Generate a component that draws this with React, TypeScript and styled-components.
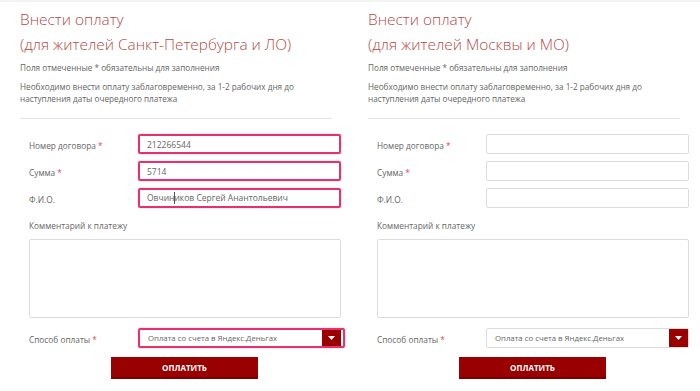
import React from "react";
import styled, { createGlobalStyle, css } from "styled-components";

const Global = createGlobalStyle`
  html, body { margin: 0; padding: 0; background: #fff; }
  body { font-family: "Open Sans", "Liberation Sans", sans-serif; color: #555; }
  * { box-sizing: border-box; }
`;

const Page = styled.div`
  width: 700px;
  height: 391px;
  overflow: hidden;
  border-top: 2px solid #f3f3f3;
  padding-left: 20px;
  display: grid;
  grid-template-columns: 330px 330px;
  column-gap: 18px;
`;

const Column = styled.div`
  display: flex;
  flex-direction: column;
`;

const Header = styled.div`
  width: 312px;
  padding-top: 5px;
  padding-bottom: 13px;
  border-bottom: 1px solid #e4e4e4;
`;

const Title = styled.h2`
  margin: 0;
  font-weight: 300;
  font-size: 15.4px;
  line-height: 25px;
  color: #b54a47;
`;

const Note = styled.p`
  margin: 0;
  font-size: 8.2px;
  line-height: 12px;
  color: #666;
  & + & { margin-top: 7px; }
`;

const Notes = styled.div`
  margin-top: 5px;
`;

const Form = styled.form`
  width: 312px;
  margin-left: 9px;
  padding-top: 15px;
  display: flex;
  flex-direction: column;
`;

const Rows = styled.div`
  display: flex;
  flex-direction: column;
  gap: 7px;
`;

const Row = styled.div`
  display: grid;
  grid-template-columns: 109px 1fr;
  align-items: center;
`;

const Label = styled.label`
  font-size: 8.3px;
  color: #666;
  padding-top: 2px;
`;

const Star = styled.span`
  color: #e8474f;
`;

const focusRing = css`
  border: 2px solid #e6326c;
  box-shadow: 0 0 2px rgba(230, 50, 108, 0.35);
`;

const Input = styled.div<{ $active?: boolean }>`
  height: 20px;
  border: 1px solid #dcdcdc;
  border-radius: 2px;
  padding: 0 7px;
  display: flex;
  align-items: center;
  font-size: 8.5px;
  color: #666;
  ${(p) => p.$active && focusRing}
`;

const Caret = styled.span`
  display: inline-block;
  width: 1px;
  height: 12px;
  background: #555;
  margin: 0 -1px 0 0;
  vertical-align: middle;
`;

const CommentLabel = styled(Label)`
  margin-top: 10px;
  display: block;
`;

const TextArea = styled.div`
  margin-top: 8px;
  height: 79px;
  border: 1px solid #dcdcdc;
  border-radius: 2px;
`;

const SelectRow = styled(Row)`
  margin-top: 10px;
`;

const Select = styled.div<{ $active?: boolean }>`
  height: 20px;
  display: flex;
  border: 1px solid #dcdcdc;
  border-radius: 2px;
  ${(p) =>
    p.$active &&
    css`
      ${focusRing};
      margin-right: -4px;
      padding-right: 2px;
    `}
`;

const SelectText = styled.div`
  flex: 1;
  display: flex;
  align-items: center;
  padding-left: 8px;
  font-size: 7.8px;
  color: #666;
`;

const SelectBtn = styled.div`
  width: 19px;
  background: #9a0000;
  display: flex;
  align-items: center;
  justify-content: center;
`;

const ButtonWrap = styled.div`
  display: flex;
  padding-left: 82px;
  margin-top: 9px;
`;

const PayButton = styled.button`
  width: 147px;
  height: 22px;
  border: none;
  border-bottom: 2px solid #7d0000;
  background: #990000;
  color: #fff;
  font-family: "Open Sans", "Liberation Sans", sans-serif;
  font-weight: 700;
  font-size: 8px;
  padding: 0;
`;

type Panel = {
  region: string;
  active: boolean;
};

const panels: Panel[] = [
  { region: "(для жителей Санкт-Петербурга и ЛО)", active: true },
  { region: "(для жителей Москвы и МО)", active: false },
];

const Arrow = () => (
  <svg width="7" height="4" viewBox="0 0 7 4">
    <path d="M0 0 H7 L3.5 4 Z" fill="#fff" />
  </svg>
);

const PaymentPanel = ({ region, active }: Panel) => (
  <Column>
    <Header>
      <Title>Внести оплату</Title>
      <Title>{region}</Title>
      <Notes>
        <Note>Поля отмеченные * обязательны для заполнения</Note>
        <Note>
          Необходимо внести оплату заблаговременно, за 1-2 рабочих дня до
          <br />
          наступления даты очередного платежа
        </Note>
      </Notes>
    </Header>
    <Form>
      <Rows>
        <Row>
          <Label>
            Номер договора <Star>*</Star>
          </Label>
          <Input $active={active}>{active ? "212266544" : ""}</Input>
        </Row>
        <Row>
          <Label>
            Сумма <Star>*</Star>
          </Label>
          <Input $active={active}>{active ? "5714" : ""}</Input>
        </Row>
        <Row>
          <Label>Ф.И.О.</Label>
          <Input $active={active}>
            {active ? (
              <span>
                Овчин<Caret />иков Сергей Анантольевич
              </span>
            ) : (
              ""
            )}
          </Input>
        </Row>
      </Rows>
      <CommentLabel>Комментарий к платежу</CommentLabel>
      <TextArea />
      <SelectRow>
        <Label>
          Способ оплаты <Star>*</Star>
        </Label>
        <Select $active={active}>
          <SelectText>Оплата со счета в Яндекс.Деньгах</SelectText>
          <SelectBtn>
            <Arrow />
          </SelectBtn>
        </Select>
      </SelectRow>
      <ButtonWrap>
        <PayButton type="button">ОПЛАТИТЬ</PayButton>
      </ButtonWrap>
    </Form>
  </Column>
);

export default function App() {
  return (
    <>
      <Global />
      <Page>
        {panels.map((p) => (
          <PaymentPanel key={p.region} {...p} />
        ))}
      </Page>
    </>
  );
}
